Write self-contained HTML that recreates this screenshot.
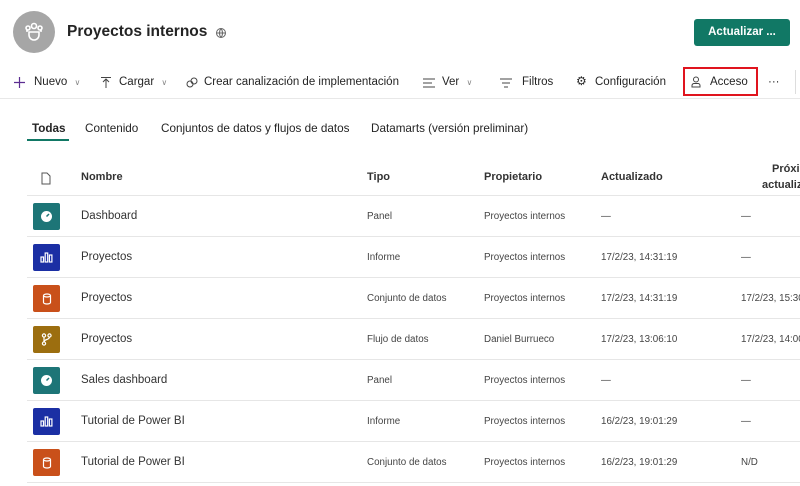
<!DOCTYPE html>
<html><head><meta charset="utf-8"><style>
*{margin:0;padding:0;box-sizing:border-box}
body{width:800px;height:486px;overflow:hidden;background:#fff;font-family:"Liberation Sans",sans-serif;color:#242424;position:relative}
.a{position:absolute;white-space:nowrap}
.tb{font-size:11.5px;color:#242424;top:76px}
.hd{font-size:11px;font-weight:bold;color:#333}
.row{position:absolute;left:27px;right:0;height:41px;border-bottom:1px solid #e6e6e6}
.ic{position:absolute;left:6px;top:7px;width:27px;height:27px;border-radius:2px;display:flex;align-items:center;justify-content:center}
.nm{position:absolute;left:54px;top:14px;font-size:11.5px;color:#333;white-space:nowrap}
.c{position:absolute;top:15px;font-size:9.8px;color:#444;white-space:nowrap}
.t{font-size:11.7px;top:122px}
</style></head><body>
<div class="a" style="left:13px;top:11px;width:42px;height:42px;border-radius:50%;background:#a6a6a6"></div>
<svg class="a" style="left:20px;top:18px" width="28" height="28" viewBox="0 0 28 28" fill="none" stroke="#fff" stroke-width="1.6"><circle cx="14" cy="8" r="2.5"/><circle cx="8" cy="10" r="2"/><circle cx="20" cy="10" r="2"/><path d="M9 14h10v3a5 5 0 0 1-10 0z"/><path d="M6 13h2M20 13h2"/></svg>
<div class="a" style="left:67px;top:23px;font-size:15.5px;font-weight:bold;color:#242424">Proyectos internos</div>
<svg class="a" style="left:215px;top:27px" width="12" height="12" viewBox="0 0 12 12" fill="none" stroke="#666" stroke-width="1"><circle cx="6" cy="6" r="4.5"/><path d="M1.5 6h9M6 1.5c-2 2.5-2 6.5 0 9M6 1.5c2 2.5 2 6.5 0 9"/></svg>
<div class="a" style="left:694px;top:19px;width:96px;height:27px;background:#117865;border-radius:3px;color:#fff;font-size:11.5px;font-weight:bold;text-align:center;line-height:27px">Actualizar ...</div>

<svg class="a" style="left:14px;top:77px" width="11" height="11" stroke="#5c2d91" stroke-width="1.2"><path d="M5.5 0v11M0 5.5h11"/></svg>
<div class="a tb" style="left:34px">Nuevo <span style="color:#888;font-size:8px;margin-left:4px">∨</span></div>
<svg class="a" style="left:101px;top:77px" width="10" height="11" fill="none" stroke="#444" stroke-width="1"><path d="M0 .5h10M5 2v9M2 5l3-3 3 3"/></svg>
<div class="a tb" style="left:119px">Cargar <span style="color:#888;font-size:8px;margin-left:4px">∨</span></div>
<svg class="a" style="left:186px;top:77px" width="12" height="11" fill="none" stroke="#444" stroke-width="1"><circle cx="4" cy="7" r="3"/><circle cx="8" cy="4" r="3"/></svg>
<div class="a tb" style="left:204px">Crear canalización de implementación</div>
<svg class="a" style="left:423px;top:78px" width="12" height="10" stroke="#444" stroke-width="1"><path d="M0 1h12M0 5h9M0 9h12"/></svg>
<div class="a tb" style="left:442px">Ver <span style="color:#888;font-size:8px;margin-left:4px">∨</span></div>
<svg class="a" style="left:500px;top:78px" width="12" height="10" stroke="#444" stroke-width="1"><path d="M0 1h12M2 5h8M4 9h4"/></svg>
<div class="a tb" style="left:522px">Filtros</div>
<div class="a tb" style="left:576px;top:74px;font-size:12px">⚙</div>
<div class="a tb" style="left:595px">Configuración</div>
<div class="a" style="left:683px;top:67px;width:75px;height:29px;border:2px solid #e0141e"></div>
<svg class="a" style="left:691px;top:76px" width="10" height="12" viewBox="0 0 10 12" fill="none" stroke="#444" stroke-width="1"><circle cx="5" cy="3.5" r="2.5"/><path d="M1 11v-1.5a2 2 0 0 1 2-2h4a2 2 0 0 1 2 2V11z"/></svg>
<div class="a tb" style="left:710px">Acceso</div>
<div class="a tb" style="left:768px">···</div>
<div class="a" style="left:795px;top:70px;width:1px;height:24px;background:#ddd"></div>
<div class="a" style="left:0;top:98px;width:800px;height:1px;background:#e8e8e8"></div>

<div class="a t" style="left:32px;font-weight:bold">Todas</div>
<div class="a" style="left:27px;top:139px;width:42px;height:2px;background:#117865"></div>
<div class="a t" style="left:85px">Contenido</div>
<div class="a t" style="left:161px">Conjuntos de datos y flujos de datos</div>
<div class="a t" style="left:371px">Datamarts (versión preliminar)</div>

<svg class="a" style="left:41px;top:172px" width="10" height="13" viewBox="0 0 10 13" fill="none" stroke="#555" stroke-width="1"><path d="M1 1h5l3 3v8H1z"/></svg>
<div class="a hd" style="left:81px;top:171px">Nombre</div>
<div class="a hd" style="left:367px;top:171px">Tipo</div>
<div class="a hd" style="left:484px;top:171px">Propietario</div>
<div class="a hd" style="left:601px;top:171px">Actualizado</div>
<div class="a hd" style="left:772px;top:163px">Próxi</div>
<div class="a hd" style="left:762px;top:179px">actualiz</div>
<div class="a" style="left:27px;top:195px;width:773px;height:1px;background:#e6e6e6"></div>

<div class="row" style="top:196px"><div class="ic" style="background:#1d7577"><svg width="13" height="13"><circle cx="6.5" cy="6.5" r="5.5" fill="#fff"/><path d="M6.5 6.5l2.5-2.5" stroke="#1d7577" stroke-width="1.5"/></svg></div><div class="nm">Dashboard</div><div class="c" style="left:340px">Panel</div><div class="c" style="left:457px">Proyectos internos</div><div class="c" style="left:574px">—</div><div class="c" style="left:714px">—</div></div>
<div class="row" style="top:237px"><div class="ic" style="background:#1b2fa4"><svg width="13" height="11" fill="none" stroke="#fff" stroke-width="1.2"><rect x="1" y="5" width="2.5" height="5"/><rect x="5.2" y="1" width="2.5" height="9"/><rect x="9.4" y="3" width="2.5" height="7"/></svg></div><div class="nm">Proyectos</div><div class="c" style="left:340px">Informe</div><div class="c" style="left:457px">Proyectos internos</div><div class="c" style="left:574px">17/2/23, 14:31:19</div><div class="c" style="left:714px">—</div></div>
<div class="row" style="top:278px"><div class="ic" style="background:#c9501a"><svg width="10" height="12" viewBox="0 0 10 12" fill="none" stroke="#fff" stroke-width="1.2"><ellipse cx="5" cy="2.5" rx="3.5" ry="1.5"/><path d="M1.5 2.5v7c0 .8 1.6 1.5 3.5 1.5s3.5-.7 3.5-1.5v-7"/></svg></div><div class="nm">Proyectos</div><div class="c" style="left:340px">Conjunto de datos</div><div class="c" style="left:457px">Proyectos internos</div><div class="c" style="left:574px">17/2/23, 14:31:19</div><div class="c" style="left:714px">17/2/23, 15:30</div></div>
<div class="row" style="top:319px"><div class="ic" style="background:#9c6e0f"><svg width="11" height="13" fill="none" stroke="#fff" stroke-width="1.2"><circle cx="3" cy="2.5" r="1.6"/><circle cx="8.5" cy="2.5" r="1.6"/><circle cx="3" cy="10.5" r="1.6"/><path d="M3 4v5M8.5 4c0 3-5.5 2-5.5 5"/></svg></div><div class="nm">Proyectos</div><div class="c" style="left:340px">Flujo de datos</div><div class="c" style="left:457px">Daniel Burrueco</div><div class="c" style="left:574px">17/2/23, 13:06:10</div><div class="c" style="left:714px">17/2/23, 14:00</div></div>
<div class="row" style="top:360px"><div class="ic" style="background:#1d7577"><svg width="13" height="13"><circle cx="6.5" cy="6.5" r="5.5" fill="#fff"/><path d="M6.5 6.5l2.5-2.5" stroke="#1d7577" stroke-width="1.5"/></svg></div><div class="nm">Sales dashboard</div><div class="c" style="left:340px">Panel</div><div class="c" style="left:457px">Proyectos internos</div><div class="c" style="left:574px">—</div><div class="c" style="left:714px">—</div></div>
<div class="row" style="top:401px"><div class="ic" style="background:#1b2fa4"><svg width="13" height="11" fill="none" stroke="#fff" stroke-width="1.2"><rect x="1" y="5" width="2.5" height="5"/><rect x="5.2" y="1" width="2.5" height="9"/><rect x="9.4" y="3" width="2.5" height="7"/></svg></div><div class="nm">Tutorial de Power BI</div><div class="c" style="left:340px">Informe</div><div class="c" style="left:457px">Proyectos internos</div><div class="c" style="left:574px">16/2/23, 19:01:29</div><div class="c" style="left:714px">—</div></div>
<div class="row" style="top:442px"><div class="ic" style="background:#c9501a"><svg width="10" height="12" viewBox="0 0 10 12" fill="none" stroke="#fff" stroke-width="1.2"><ellipse cx="5" cy="2.5" rx="3.5" ry="1.5"/><path d="M1.5 2.5v7c0 .8 1.6 1.5 3.5 1.5s3.5-.7 3.5-1.5v-7"/></svg></div><div class="nm">Tutorial de Power BI</div><div class="c" style="left:340px">Conjunto de datos</div><div class="c" style="left:457px">Proyectos internos</div><div class="c" style="left:574px">16/2/23, 19:01:29</div><div class="c" style="left:714px">N/D</div></div>
</body></html>
